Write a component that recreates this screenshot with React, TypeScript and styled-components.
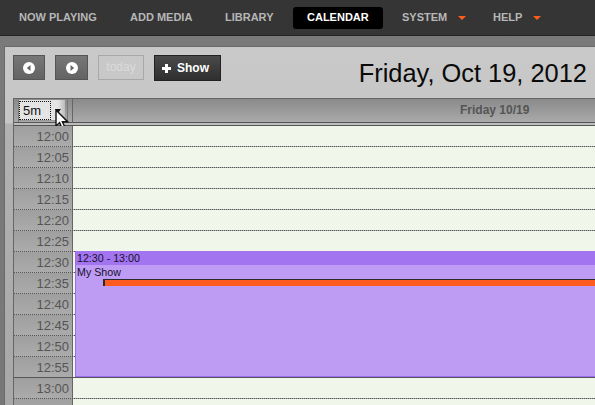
import React from "react";
import styled, { createGlobalStyle } from "styled-components";

const Global = createGlobalStyle`
  html, body { margin: 0; padding: 0; width: 595px; height: 405px; overflow: hidden; background: #6f6f6f; }
  body { font-family: "Liberation Sans", Arial, sans-serif; }
  * { box-sizing: border-box; }
`;

const Page = styled.div`
  width: 595px;
  height: 405px;
  overflow: hidden;
  display: flex;
  flex-direction: column;
  background: linear-gradient(#666 0, #7a7a7a 10px, #777 100%);
`;

const Nav = styled.nav`
  flex: none;
  height: 36px;
  background: #353535;
  border-bottom: 1px solid #242424;
  display: flex;
  align-items: flex-start;
  padding: 7px 0 0 8px;
`;

const NavItem = styled.div<{ $active?: boolean; $w: number; $pad: number }>`
  width: ${(p) => p.$w}px;
  height: 22px;
  flex: none;
  border-radius: 3px;
  background: ${(p) => (p.$active ? "#000" : "transparent")};
  color: ${(p) => (p.$active ? "#fff" : "#b7b7b7")};
  font-size: 11px;
  font-weight: bold;
  line-height: 21px;
  padding-left: ${(p) => p.$pad}px;
  white-space: nowrap;
  display: flex;
  align-items: flex-start;
`;

const Caret = styled.i`
  display: block;
  width: 0;
  height: 0;
  margin: 9px 0 0 11px;
  border-left: 4px solid transparent;
  border-right: 4px solid transparent;
  border-top: 4px solid #ff5d1a;
`;

const Panel = styled.main`
  flex: 1;
  margin: 10px 0 0 4px;
  border: 1px solid #6a6a6a;
  border-right: 0;
  border-bottom: 0;
  background: linear-gradient(#c9c9c9 0, #c6c6c6 76px, #b2b2b2 77px, #a8a8a8 100%);
  display: flex;
  flex-direction: column;
  min-height: 0;
`;

const Toolbar = styled.div`
  flex: none;
  height: 51px;
  padding: 8px 8px 0 8px;
  display: flex;
  align-items: flex-start;
`;

const NavButton = styled.div<{ $w: number }>`
  width: ${(p) => p.$w}px;
  height: 25px;
  margin-right: 10px;
  border: 1px solid #555;
  background: linear-gradient(#777, #636363);
  display: flex;
  align-items: center;
  justify-content: center;
`;

const TodayButton = styled.div`
  width: 46px;
  height: 25px;
  margin: 0 10px 0 0;
  border: 1px solid #a8a8a8;
  color: #dcdcdc;
  font-size: 12px;
  line-height: 23px;
  text-align: center;
`;

const ShowButton = styled.div`
  width: 67px;
  height: 26px;
  border: 1px solid #222;
  background: linear-gradient(#4a4a4a, #2f2f2f);
  color: #fff;
  font-size: 12px;
  font-weight: bold;
  display: flex;
  align-items: center;
  padding-left: 7px;
  gap: 6px;
`;

const Title = styled.h1`
  margin: 3px 0 0 auto;
  font-size: 25.42px;
  line-height: 30px;
  font-weight: normal;
  color: #0a0a0a;
  white-space: nowrap;
`;

const Calendar = styled.div`
  flex: 1;
  margin-left: 8px;
  border-left: 1px solid #666;
  border-top: 1px solid #666;
  min-height: 0;
  display: flex;
  flex-direction: column;
`;

const Header = styled.div`
  flex: none;
  height: 27px;
  display: flex;
  background: #bdbdbd;
  padding-bottom: 2px;
  border-bottom: 1px solid #555;
`;

const HeaderCorner = styled.div`
  flex: none;
  width: 59px;
  border-right: 1px solid #666;
  border-bottom: 1px solid #555;
  background: linear-gradient(#8a8a8a, #aaa);
  padding-left: 4px;
  position: relative;
`;

const SelectFrame = styled.div`
  width: 50px;
  height: 23px;
  border-left: 1px solid #777;
  border-right: 1px solid #777;
  padding-top: 1px;
`;

const HeaderDay = styled.div`
  flex: 1;
  background: linear-gradient(#8a8a8a, #aaa);
  border-bottom: 1px solid #555;
  color: #555;
  font-size: 12px;
  font-weight: bold;
  line-height: 23px;
  padding-left: 387px;
`;

const Select = styled.div`
  width: 46px;
  height: 21px;
  display: flex;
  background: linear-gradient(90deg, #e4e4e4 85%, #bbb);
  border-bottom: 1px solid #999;
  padding-top: 1px;
`;

const SelectValue = styled.div`
  width: 32px;
  height: 19px;
  border: 1px dotted #111;
  font-size: 13px;
  line-height: 17px;
  padding-left: 3px;
  color: #111;
`;

const SelectArrow = styled.i`
  display: block;
  width: 0;
  height: 0;
  margin: 8px 0 0 4px;
  border-left: 3px solid transparent;
  border-right: 3px solid transparent;
  border-top: 4px solid #111;
`;

const Pointer = styled.svg`
  position: absolute;
  left: 41px;
  top: 10px;
`;

const Body = styled.div`
  flex: 1;
  position: relative;
  min-height: 0;
  overflow: hidden;
`;

const Row = styled.div<{ $hour?: boolean }>`
  height: 21px;
  display: flex;
  border-bottom: 1px ${(p) => (p.$hour ? "solid #555" : "dotted #555")};
`;

const TimeCell = styled.div`
  flex: none;
  width: 59px;
  border-right: 1px solid #666;
  background: linear-gradient(#9f9f9f, #ababab);
  color: #555;
  font-size: 13px;
  line-height: 22px;
  text-align: right;
  padding-right: 3px;
`;

const SlotCell = styled.div`
  flex: 1;
  background: #f0f6ea;
`;

const EventBox = styled.div`
  position: absolute;
  left: 61px;
  top: 125px;
  right: 0;
  height: 126px;
  background: #bf9cf4;
  border-left: 1px solid #9a6fe6;
  border-bottom: 1px solid #9a6ef0;
  color: #14102a;
  font-size: 10.67px;
`;

const EventTime = styled.div`
  height: 14px;
  background: #a374ef;
  line-height: 14px;
  padding-left: 1px;
`;

const EventTitle = styled.div`
  height: 14px;
  line-height: 14px;
  padding-left: 1px;
`;

const Progress = styled.div`
  height: 7px;
  margin-left: 27px;
  background: #ff5a1f;
  border-left: 2px solid #2a2a2a;
  border-top: 1px solid #2a2a2a;
`;

const times = ["12:00","12:05","12:10","12:15","12:20","12:25","12:30","12:35","12:40","12:45","12:50","12:55","13:00","13:05"];

const Circle: React.FC<{ left?: boolean }> = ({ left }) => (
  <svg width="12" height="12" viewBox="0 0 12 12">
    <circle cx="6" cy="6" r="6" fill="#fff" />
    <path d={left ? "M7.5 3v6L3.8 6z" : "M4.5 3v6L8.2 6z"} fill="#666" />
  </svg>
);

export default function App() {
  return (
    <Page>
      <Global />
      <Nav>
        <NavItem $w={111} $pad={11}>NOW PLAYING</NavItem>
        <NavItem $w={95} $pad={11}>ADD MEDIA</NavItem>
        <NavItem $w={79} $pad={11}>LIBRARY</NavItem>
        <NavItem $w={90} $pad={14} $active>CALENDAR</NavItem>
        <NavItem $w={91} $pad={19}>SYSTEM<Caret /></NavItem>
        <NavItem $w={90} $pad={19}>HELP<Caret /></NavItem>
      </Nav>
      <Panel>
        <Toolbar>
          <NavButton $w={32}><Circle left /></NavButton>
          <NavButton $w={33}><Circle /></NavButton>
          <TodayButton>today</TodayButton>
          <ShowButton>
            <svg width="9" height="9" viewBox="0 0 9 9"><path d="M3 0h3v3h3v3H6v3H3V6H0V3h3z" fill="#fff" /></svg>
            Show
          </ShowButton>
          <Title>Friday, Oct 19, 2012</Title>
        </Toolbar>
        <Calendar>
          <Header>
            <HeaderCorner>
              <SelectFrame>
                <Select>
                  <SelectValue>5m</SelectValue>
                  <SelectArrow />
                </Select>
              </SelectFrame>
              <Pointer width="14" height="22" viewBox="0 0 14 22">
                <path d="M1 1v16l3.6-3.4 2.9 6.7 2.8-1.2-2.9-6.4h5.2z" fill="#fff" stroke="#111" strokeWidth="1.4" />
              </Pointer>
            </HeaderCorner>
            <HeaderDay>Friday 10/19</HeaderDay>
          </Header>
          <Body>
            {times.map((t, i) => (
              <Row key={t} $hour={i === 11}>
                <TimeCell>{t === "13:05" ? "" : t}</TimeCell>
                <SlotCell />
              </Row>
            ))}
            <EventBox>
              <EventTime>12:30 - 13:00</EventTime>
              <EventTitle>My Show</EventTitle>
              <Progress />
            </EventBox>
          </Body>
        </Calendar>
      </Panel>
    </Page>
  );
}
